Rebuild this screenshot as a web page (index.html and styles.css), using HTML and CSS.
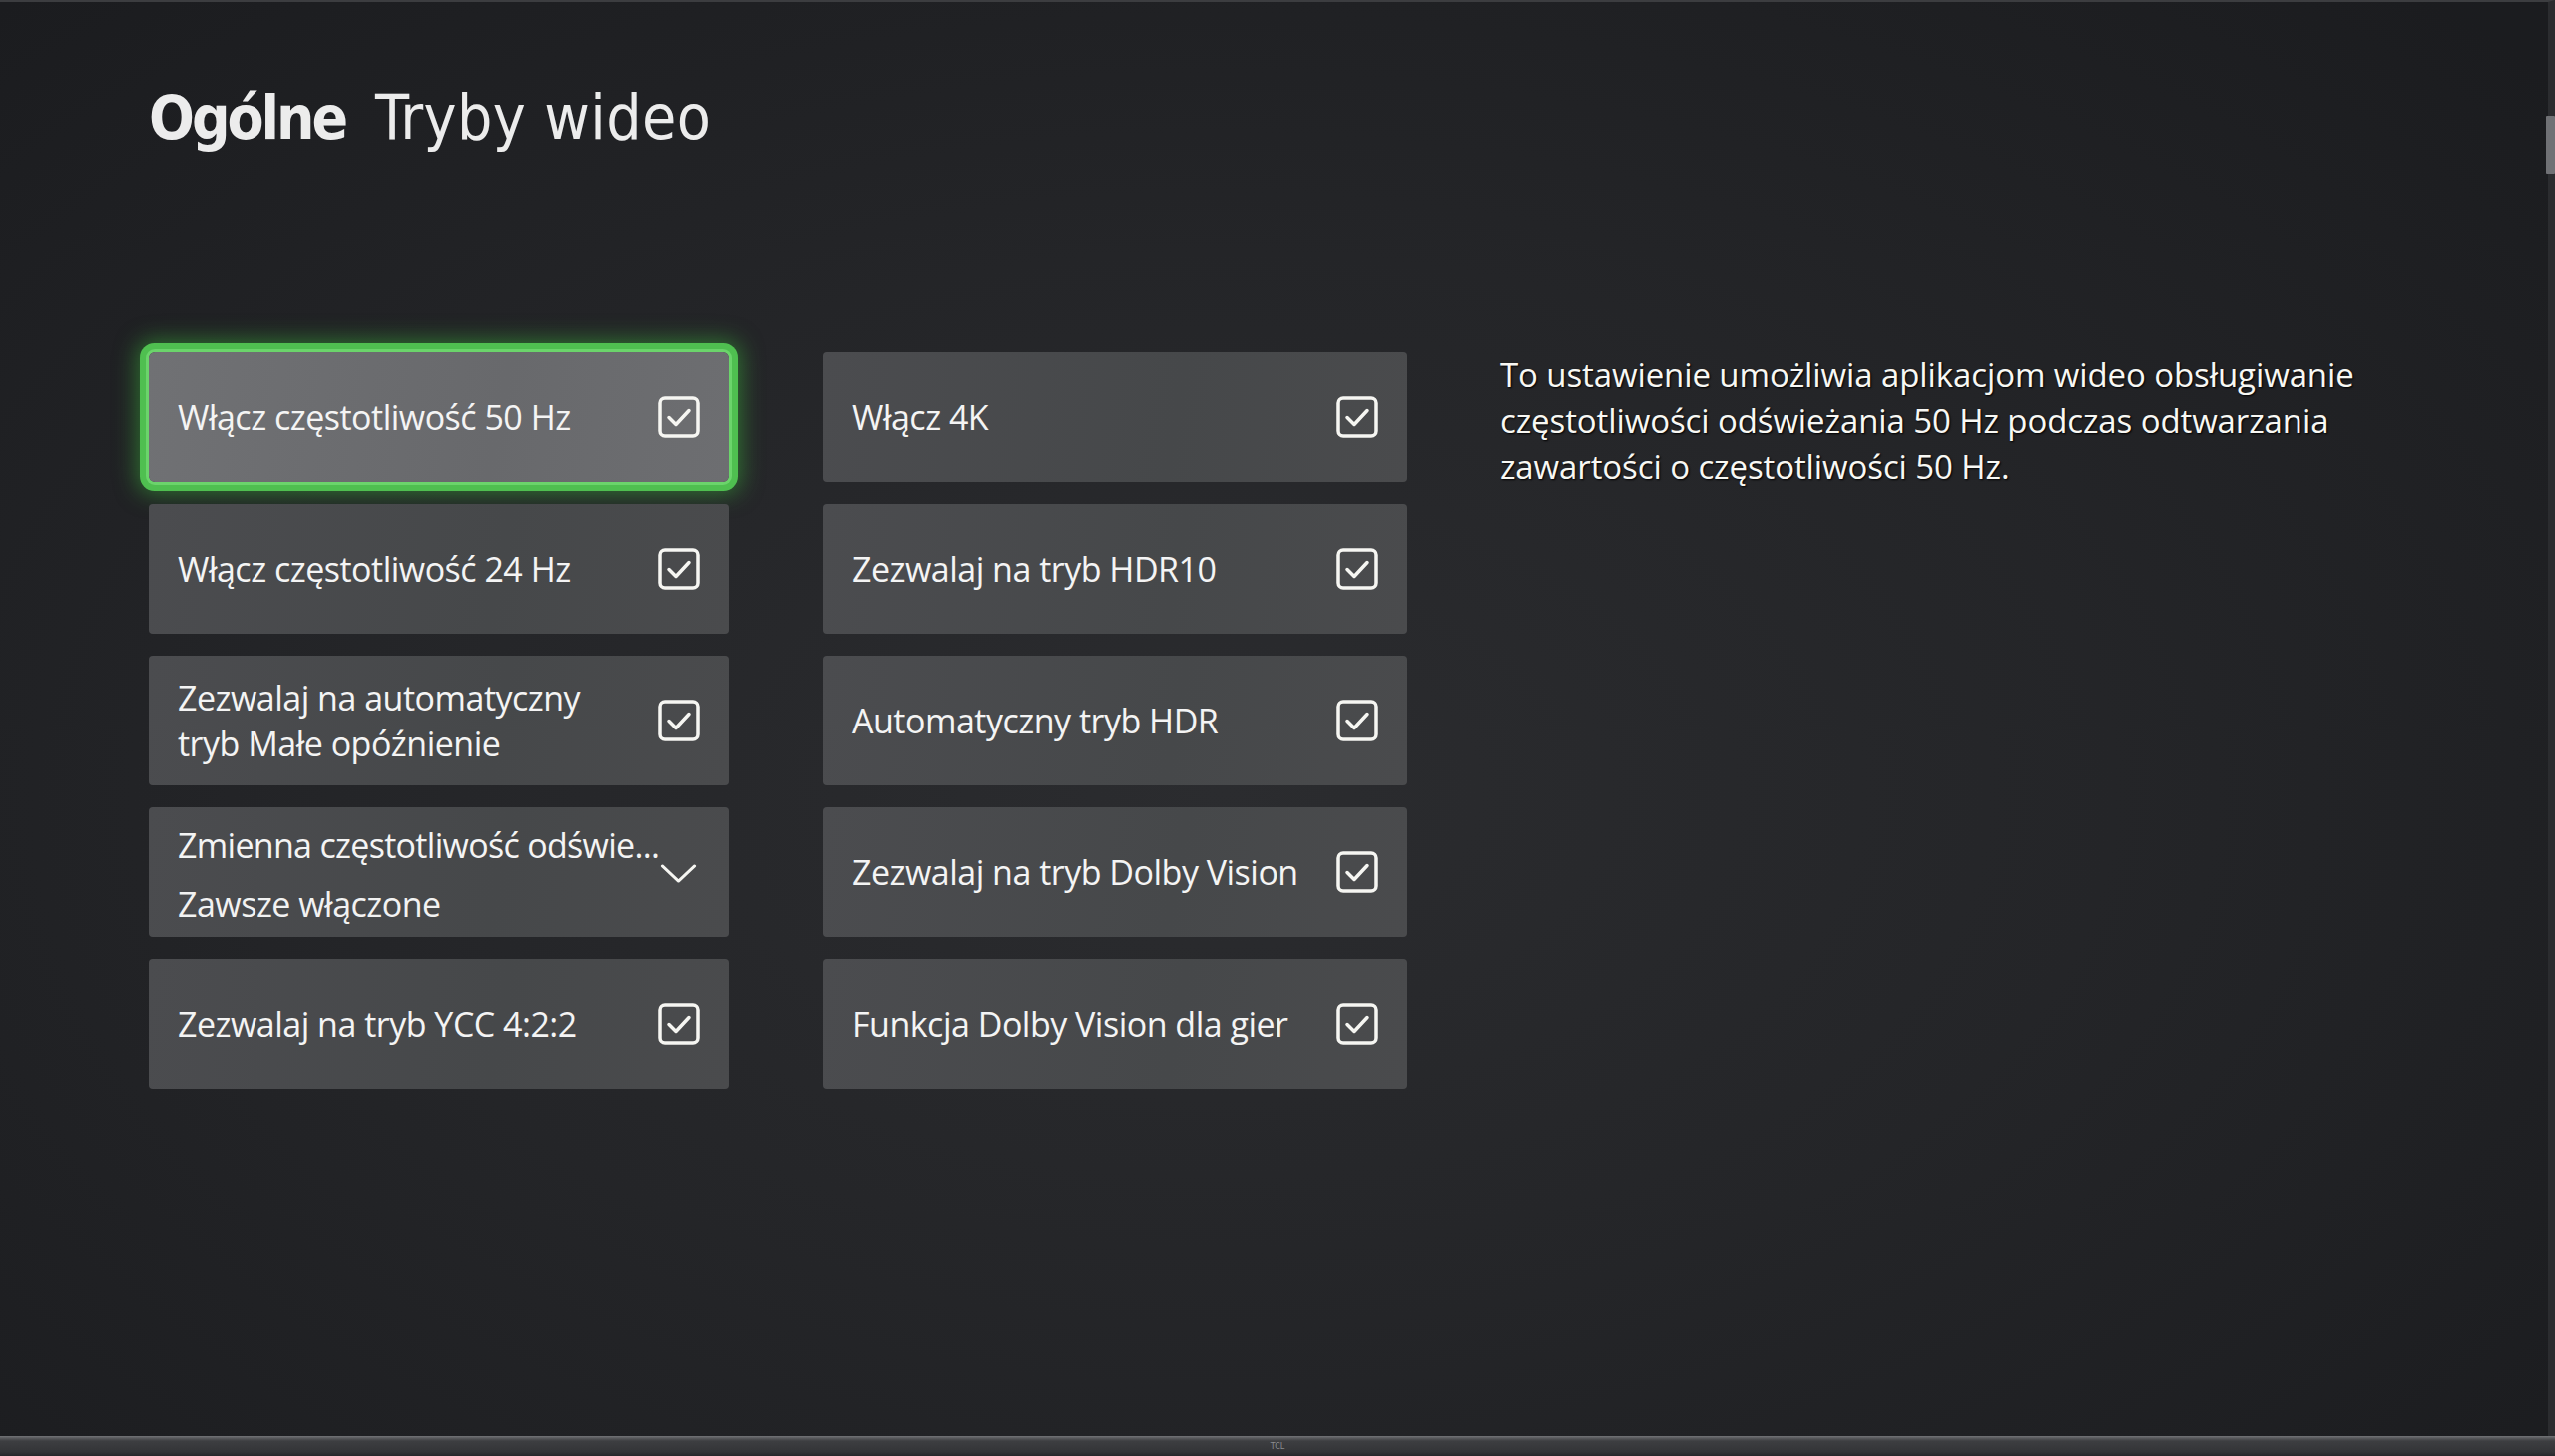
FILE: index.html
```html
<!DOCTYPE html>
<html lang="pl">
<head>
    <meta charset="UTF-8">
    <meta name="viewport" content="width=device-width, initial-scale=1.0">
    <title>Tryby wideo</title>
    <link rel="stylesheet" href="styles.css">
</head>
<body>
    <div class="screen">
        <div class="display">
            <h1 class="title"><span class="title-main">Ogólne</span> <span class="title-sub">Tryby wideo</span></h1>

            <div class="content">
                <div class="column">
                    <div class="tile focused">
                        <span class="label">Włącz częstotliwość 50 Hz</span>
                        <span class="check"><svg viewBox="0 0 42 42"><rect x="2" y="2" width="38" height="38" rx="5"/><path d="M11 21.5 L18 28.5 L31 14.5"/></svg></span>
                    </div>
                    <div class="tile">
                        <span class="label">Włącz częstotliwość 24 Hz</span>
                        <span class="check"><svg viewBox="0 0 42 42"><rect x="2" y="2" width="38" height="38" rx="5"/><path d="M11 21.5 L18 28.5 L31 14.5"/></svg></span>
                    </div>
                    <div class="tile">
                        <span class="label">Zezwalaj na automatyczny<br>tryb Małe opóźnienie</span>
                        <span class="check"><svg viewBox="0 0 42 42"><rect x="2" y="2" width="38" height="38" rx="5"/><path d="M11 21.5 L18 28.5 L31 14.5"/></svg></span>
                    </div>
                    <div class="tile dropdown">
                        <div class="dropdown-text">
                            <span class="label">Zmienna częstotliwość odświe...</span>
                            <span class="value">Zawsze włączone</span>
                        </div>
                        <span class="chevron"><svg viewBox="0 0 38 20"><path d="M2 2 L19 18 L36 2"/></svg></span>
                    </div>
                    <div class="tile">
                        <span class="label">Zezwalaj na tryb YCC 4:2:2</span>
                        <span class="check"><svg viewBox="0 0 42 42"><rect x="2" y="2" width="38" height="38" rx="5"/><path d="M11 21.5 L18 28.5 L31 14.5"/></svg></span>
                    </div>
                </div>

                <div class="column wide">
                    <div class="tile">
                        <span class="label">Włącz 4K</span>
                        <span class="check"><svg viewBox="0 0 42 42"><rect x="2" y="2" width="38" height="38" rx="5"/><path d="M11 21.5 L18 28.5 L31 14.5"/></svg></span>
                    </div>
                    <div class="tile">
                        <span class="label">Zezwalaj na tryb HDR10</span>
                        <span class="check"><svg viewBox="0 0 42 42"><rect x="2" y="2" width="38" height="38" rx="5"/><path d="M11 21.5 L18 28.5 L31 14.5"/></svg></span>
                    </div>
                    <div class="tile">
                        <span class="label">Automatyczny tryb HDR</span>
                        <span class="check"><svg viewBox="0 0 42 42"><rect x="2" y="2" width="38" height="38" rx="5"/><path d="M11 21.5 L18 28.5 L31 14.5"/></svg></span>
                    </div>
                    <div class="tile">
                        <span class="label">Zezwalaj na tryb Dolby Vision</span>
                        <span class="check"><svg viewBox="0 0 42 42"><rect x="2" y="2" width="38" height="38" rx="5"/><path d="M11 21.5 L18 28.5 L31 14.5"/></svg></span>
                    </div>
                    <div class="tile">
                        <span class="label">Funkcja Dolby Vision dla gier</span>
                        <span class="check"><svg viewBox="0 0 42 42"><rect x="2" y="2" width="38" height="38" rx="5"/><path d="M11 21.5 L18 28.5 L31 14.5"/></svg></span>
                    </div>
                </div>

                <p class="description">To ustawienie umożliwia aplikacjom wideo obsługiwanie częstotliwości odświeżania 50 Hz podczas odtwarzania zawartości o częstotliwości 50 Hz.</p>
            </div>

            <span class="sticker"></span>
        </div>
        <div class="bezel"><span class="brand">TCL</span></div>
    </div>
</body>
</html>
```

FILE: styles.css
```css
html, body {
    margin: 0;
    padding: 0;
    background: #151618;
}
.screen {
    width: 2560px;
    height: 1459px;
    display: flex;
    flex-direction: column;
    overflow: hidden;
}
.display {
    position: relative;
    flex: 1;
    padding: 78px 0 0 149px;
    border-top: 2px solid #3c3d40;
    border-right: 7px solid #2b2c2f;
    background: radial-gradient(ellipse 70% 75% at 48% 55%, #2b2c2f 0%, #242528 50%, #1b1c1f 100%);
    font-family: "Open Sans", "Noto Sans", sans-serif;
    color: #f2f2f2;
}
.title {
    margin: 0;
    font-family: "DejaVu Sans Condensed", "DejaVu Sans", sans-serif;
    font-size: 62px;
    line-height: 76px;
    font-weight: normal;
    color: #ececec;
}
.title-main {
    font-size: 60px;
    font-weight: bold;
    letter-spacing: -3px;
    margin-right: 12px;
}
.title-sub {
    letter-spacing: 0.4px;
}
.content {
    display: flex;
    align-items: flex-start;
    margin-top: 197px;
}
.column {
    display: flex;
    flex-direction: column;
    gap: 22px;
    width: 581px;
    margin-right: 95px;
}
.column.wide {
    width: 585px;
    margin-right: 93px;
}
.tile {
    height: 130px;
    box-sizing: border-box;
    padding: 0 29px 0 29px;
    display: flex;
    align-items: center;
    justify-content: space-between;
    background: linear-gradient(100deg, #4b4c4f 0%, #46484a 60%, #4a4b4d 100%);
    border-radius: 4px;
}
.tile.focused {
    background: linear-gradient(100deg, #707174 0%, #68696c 60%, #6d6e71 100%);
    box-shadow: 0 0 0 3px #6bd46b, 0 0 0 9px #4fbf50, 0 0 22px 12px rgba(60, 190, 60, 0.5);
    border-radius: 6px;
}
.label {
    font-size: 34px;
    line-height: 46px;
    letter-spacing: -0.5px;
    color: #f4f4f4;
    white-space: nowrap;
}
.check {
    width: 42px;
    height: 42px;
    flex: none;
}
.check svg, .chevron svg {
    display: block;
    width: 100%;
    height: 100%;
    fill: none;
    stroke: #f6f6f2;
    stroke-width: 3.5;
    stroke-linecap: round;
    stroke-linejoin: round;
}
.tile.dropdown {
    align-items: flex-start;
}
.dropdown-text {
    display: flex;
    flex-direction: column;
    padding-top: 15px;
    gap: 13px;
}
.dropdown-text .label {
    letter-spacing: -0.7px;
}
.dropdown-text .value {
    font-size: 34px;
    line-height: 46px;
    letter-spacing: -0.5px;
}
.chevron {
    width: 37px;
    height: 19px;
    margin-top: 57px;
    margin-right: 3px;
    flex: none;
}
.chevron svg {
    stroke-width: 3;
}
.description {
    margin: 0;
    width: 900px;
    font-size: 33px;
    line-height: 46px;
    letter-spacing: -0.1px;
    color: #f8f8f4;
    text-shadow: 1px 1px 2px #000;
}
.sticker {
    position: absolute;
    right: -7px;
    top: 114px;
    width: 9px;
    height: 58px;
    background: #707175;
    border-radius: 1px;
}
.bezel {
    height: 20px;
    background: linear-gradient(#737478 0, #5a5b5e 2px, #3d3e41 5px, #333437 16px, #26272a 20px);
    display: flex;
    justify-content: center;
    align-items: center;
}
.brand {
    font-family: "DejaVu Sans", sans-serif;
    font-size: 8px;
    color: #8b8c8f;
}
```
